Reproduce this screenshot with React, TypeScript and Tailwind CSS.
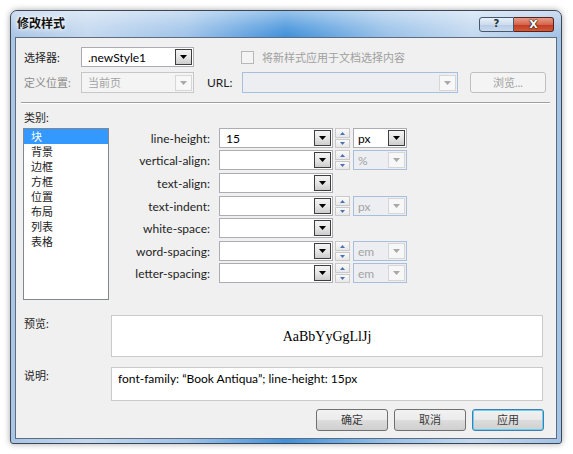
import React from 'react';

const font = "font-['Lato','Noto_Sans_CJK_SC',sans-serif]";

function Tri({ color = '#000', up = false }: { color?: string; up?: boolean }) {
  return (
    <svg width="7" height="4" viewBox="0 0 7 4">
      <path d={up ? 'M0 4L3.5 0L7 4Z' : 'M0 0L7 0L3.5 4Z'} fill={color} />
    </svg>
  );
}

function DropBtn({ disabled = false }: { disabled?: boolean }) {
  if (disabled) {
    return (
      <div className="flex h-[16px] w-[17px] shrink-0 items-center justify-center border border-[#d6d6d6] bg-[#f7f7f7]">
        <Tri color="#a8a8a8" />
      </div>
    );
  }
  return (
    <div className="flex h-[16px] w-[17px] shrink-0 items-center justify-center border border-[#3e3e3e] bg-[linear-gradient(#f4f4f4,#e6e6e6_50%,#cdcdcd)]">
      <Tri />
    </div>
  );
}

function Combo({
  value = '',
  className = '',
  textClass = 'text-[12px]',
  disabled = false,
  blue = false,
}: {
  value?: string;
  className?: string;
  textClass?: string;
  disabled?: boolean;
  blue?: boolean;
}) {
  const box = disabled
    ? blue
      ? 'border-[#a7bfdc] bg-[#eceef2] text-[#a3a3a3]'
      : 'border-[#c7c7c7] bg-[#f4f4f4] text-[#a3a3a3]'
    : 'border-[#abadb3] bg-white text-black';
  return (
    <div className={`flex shrink-0 items-center border pl-[6px] pr-[1px] ${box} ${className}`}>
      <span className={`flex-1 whitespace-nowrap leading-[15px] ${textClass}`}>{value}</span>
      <DropBtn disabled={disabled} />
    </div>
  );
}

function Spinner() {
  return (
    <div className="ml-[2px] flex h-[20px] w-[15px] shrink-0 flex-col gap-[1px]">
      <div className="flex h-[10px] items-center justify-center border border-[#c9c9c9] bg-[linear-gradient(#fafafa,#e8e8e8)]">
        <svg width="5" height="3" viewBox="0 0 5 3">
          <path d="M0 3L2.5 0L5 3Z" fill="#4b72b0" />
        </svg>
      </div>
      <div className="flex h-[9px] items-center justify-center border border-[#c9c9c9] bg-[linear-gradient(#fafafa,#e8e8e8)]">
        <svg width="5" height="3" viewBox="0 0 5 3">
          <path d="M0 0L5 0L2.5 3Z" fill="#4b72b0" />
        </svg>
      </div>
    </div>
  );
}

type Row = {
  label: string;
  mt: string;
  value?: string;
  unit?: string;
  unitOn?: boolean;
};

const rows: Row[] = [
  { label: 'line-height:', mt: 'mt-0', value: '15', unit: 'px', unitOn: true },
  { label: 'vertical-align:', mt: 'mt-[2px]', unit: '%' },
  { label: 'text-align:', mt: 'mt-[3px]' },
  { label: 'text-indent:', mt: 'mt-[3px]', unit: 'px' },
  { label: 'white-space:', mt: 'mt-[2px]' },
  { label: 'word-spacing:', mt: 'mt-[3px]', unit: 'em' },
  { label: 'letter-spacing:', mt: 'mt-[2px]', unit: 'em' },
];

const cats = ['块', '背景', '边框', '方框', '位置', '布局', '列表', '表格'];

function PushButton({ label, focused = false }: { label: string; focused?: boolean }) {
  return (
    <div
      className={`flex h-[22px] w-[72px] items-center justify-center rounded-[3px] border text-[11px] leading-[14px] text-[#3a3a3a] ${
        focused
          ? 'border-[#3c7fb1] bg-[linear-gradient(#f1f1f1,#e9e9e9_50%,#dcdcdc_51%,#d0d0d0)] shadow-[inset_0_0_0_1px_#6cd0f0]'
          : 'border-[#707070] bg-[linear-gradient(#f2f2f2,#ebebeb_50%,#dddddd_51%,#cfcfcf)]'
      }`}
    >
      {label}
    </div>
  );
}

export default function App() {
  return (
    <div className={`h-[454px] w-[573px] bg-white pl-[10px] pt-[10px] ${font}`}>
      <div className="flex h-[434px] w-[552px] flex-col rounded-t-[7px] rounded-b-[3px] border border-[#3b4756] bg-[linear-gradient(90deg,#a9c5e6_0%,#c3d8ef_14%,#9fc3e9_32%,#3f90da_50%,#97c0e8_68%,#c4d9f0_84%,#a3c2e5_100%)] shadow-[0_0_6px_rgba(0,0,0,0.35)]">
        {/* title bar */}
        <div className="flex h-[26px] shrink-0 items-center justify-between rounded-t-[6px] bg-[linear-gradient(rgba(255,255,255,0.45),rgba(255,255,255,0.15)_60%,rgba(255,255,255,0))] pl-[6px] pr-[7px]">
          <span className="text-[12px] font-bold leading-[16px] text-[#111] [text-shadow:0_0_6px_#fff,0_0_3px_#fff]">修改样式</span>
          <div className="flex">
            <div className="flex h-[15px] w-[35px] items-center justify-center rounded-l-[3px] border border-[#46586c] bg-[linear-gradient(#e8f0f9,#cddcee_50%,#b7cbe3_51%,#c9daee)]">
              <span className="font-['DejaVu_Sans',sans-serif] text-[10px] font-bold leading-none text-[#233]">?</span>
            </div>
            <div className="flex h-[15px] w-[40px] items-center justify-center rounded-r-[3px] border border-l-0 border-[#5a2216] bg-[linear-gradient(#e69c8a,#d6654c_50%,#c43b20_51%,#d0593c)]">
              <span className="font-['DejaVu_Sans',sans-serif] text-[11px] font-bold leading-none text-white [text-shadow:0_0_1px_#000,0_0_2px_#000]">X</span>
            </div>
          </div>
        </div>

        {/* client */}
        <div className="mx-[4px] mb-[4px] flex flex-1 flex-col border border-[#5d6c7e] bg-[#f0f0f0] pl-[8px] pr-[12px] pt-[9px] text-[12px] text-[#1e1e1e]">
          <div className="flex h-[20px] items-center">
            <span className="w-[57px] shrink-0 text-[11px] leading-[15px]">选择器:</span>
            <Combo value=".newStyle1" className="h-[20px] w-[113px]" />
            <div className="ml-[47px] h-[13px] w-[13px] shrink-0 border border-[#b8b8b8] bg-[#f4f4f4]" />
            <span className="ml-[8px] text-[11px] leading-[15px] text-[#a0a0a0]">将新样式应用于文档选择内容</span>
          </div>

          <div className="mt-[5px] flex h-[21px] items-center">
            <span className="w-[57px] shrink-0 text-[11px] leading-[15px] text-[#8d8d8d]">定义位置:</span>
            <Combo value="当前页" textClass="text-[11px]" disabled className="h-[21px] w-[113px]" />
            <span className="ml-[13px] w-[35px] shrink-0 leading-[15px]">URL:</span>
            <div className="flex h-[21px] w-[216px] shrink-0 items-center justify-end border border-[#a7bfdc] bg-[#eceef2] pr-[1px]">
              <DropBtn disabled />
            </div>
            <div className="ml-[12px] flex h-[21px] w-[76px] shrink-0 items-center justify-center rounded-[3px] border border-[#bfbfbf] bg-[#f4f4f4] text-[11px] leading-[15px] text-[#a0a0a0]">
              浏览...
            </div>
          </div>

          <div className="-ml-[3px] mt-[9px] w-[529px] border-t border-b border-t-[#a0a0a0] border-b-white" />

          <span className="mt-[6px] h-[16px] text-[11px] leading-[16px]">类别:</span>

          <div className="mt-[2px] flex">
            <div className="-ml-[1px] flex h-[172px] w-[86px] shrink-0 flex-col border border-[#828790] bg-white">
              {cats.map((c, i) => (
                <div
                  key={c}
                  className={`h-[15px] pl-[7px] text-[11px] leading-[15px] ${
                    i === 0 ? 'bg-[#3399ff] text-white' : 'text-[#1e1e1e]'
                  }`}
                >
                  {c}
                </div>
              ))}
            </div>

            <div className="flex flex-col">
              {rows.map((r) => (
                <div key={r.label} className={`flex h-[20px] items-center ${r.mt}`}>
                  <span className="w-[101px] shrink-0 text-right leading-[15px]">{r.label}</span>
                  <Combo value={r.value} className="ml-[9px] h-[20px] w-[114px]" />
                  {r.unit && (
                    <>
                      <Spinner />
                      <Combo
                        value={r.unit}
                        disabled={!r.unitOn}
                        blue
                        className="ml-[3px] h-[20px] w-[54px] !pl-[4px]"
                      />
                    </>
                  )}
                </div>
              ))}
            </div>
          </div>

          <div className="mt-[15px] flex">
            <span className="w-[87px] shrink-0 pt-[1px] text-[11px] leading-[15px]">预览:</span>
            <div className="flex h-[42px] w-[432px] shrink-0 items-center justify-center border border-[#cacaca] bg-white">
              <span className="pt-[2px] font-['Liberation_Serif',serif] text-[14px] leading-[18px] text-black">AaBbYyGgLlJj</span>
            </div>
          </div>

          <div className="mt-[10px] flex">
            <span className="w-[87px] shrink-0 pt-[1px] text-[11px] leading-[15px]">说明:</span>
            <div className="h-[34px] w-[432px] shrink-0 border border-[#cacaca] bg-white pl-[6px] pt-[3px] leading-[16px] text-black">
              font-family: “Book Antiqua”; line-height: 15px
            </div>
          </div>

          <div className="mt-[8px] flex justify-end gap-[6px]">
            <PushButton label="确定" />
            <PushButton label="取消" />
            <PushButton label="应用" focused />
          </div>
        </div>
      </div>
    </div>
  );
}
